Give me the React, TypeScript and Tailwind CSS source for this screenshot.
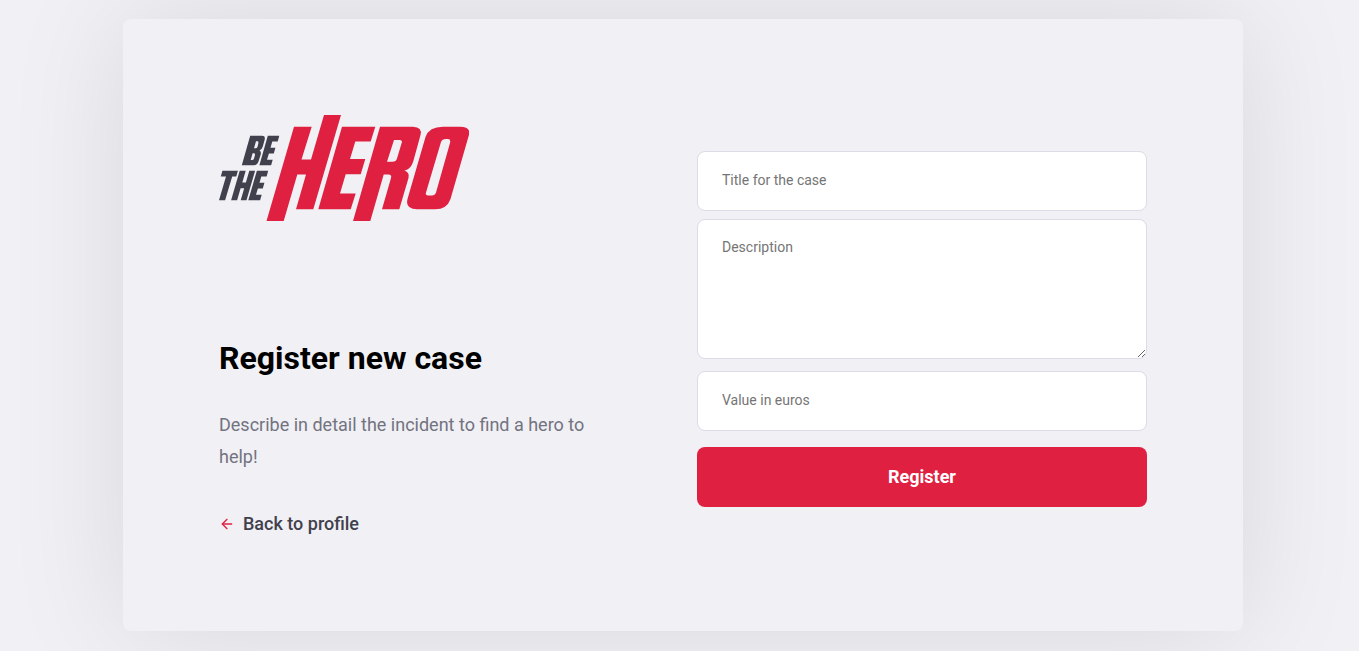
import { FiArrowLeft } from "react-icons/fi";

function Logo() {
  return (
    <svg viewBox="0 0 250 106" width="250" height="106" role="img" aria-label="Be The Hero">
      <g fill="#41414d" fillRule="evenodd">
        <path d="M31.200 20.800H43Q46.500 20.800 45.700 24.500L43.800 31.500Q43 34.500 40.500 35.500Q42.500 36.500 41.700 39.500L39.500 46.500Q38.300 50.200 35 50.200H22.800ZM37 26.200L35 33.200H37Q38.200 33.200 38.600 31.500L39.300 28.500Q39.700 26.200 38.500 26.200ZM33.600 38.300L31.700 45H33.500Q34.700 45 35.100 43.300L35.900 40.200Q36.300 38.300 35 38.300Z" />
        <path d="M48.800 20.800H60.300L58.700 26.600H53.300L51.500 32.700H56.400L54.800 38.500H49.900L48 44.700H53.700L52.100 50.200H40.400Z" />
        <path d="M3.400 55.700H18.900L17.300 61.500H13.200L6.100 85.200H0L7 61.500H1.800Z" />
        <path d="M20.700 55.700H26.700L23.300 67.400H26.900L30.300 55.700H36.100L27.500 85.200H21.700L25.200 73.200H21.600L18.100 85.200H12.100Z" />
        <path d="M37.900 55.700H49.200L47.600 61.500H42.300L40.500 67.700H45.400L43.800 73.500H38.900L37 79.700H42.700L41.100 85.200H29.300Z" />
      </g>
      <g fill="#e02041" fillRule="evenodd">
        <path d="M75 11.700H92.700L82.500 44.500H92L105 0H122L94.300 94.300H77L87 59.500H78.300L64.700 106H47.500Z" />
        <path d="M123 11.700H156.300L151.700 26.500H136.300L131 44H146.300L141.700 59.300H126.700L121 78.500H136.700L131.700 94.300H99.300Z" />
        <path d="M161 11.700H194Q203.500 12 201.500 20L194.500 45.500C192.500 52 190 54.500 185.500 55.500Q191 57.500 189.500 63L180.300 94.300H163L172 63Q173 59.500 169.500 59.500H164.700L151.300 106H134ZM175 25L168 46.700H173.500Q177 46.700 178 43.500L182.800 27.500Q183.500 25 180.500 25Z" />
        <path d="M224 11.700H241Q252.500 12 249.800 20.500L231.500 84Q228 94.300 216 94.300H198Q186 94 188.500 84L206.500 22Q210 11.700 224 11.700ZM227 24Q223 24 222 27L207 77.500Q206 80.500 209 80.500H213Q216 80.500 217 77.500L231 28Q232 24 229 24Z" />
      </g>
    </svg>
  );
}

const fieldClass =
  "w-full rounded-lg border border-[#dcdce6] bg-white px-6 text-sm text-[#333333] placeholder:text-[#757575]";

export default function App() {
  return (
    <div className="min-h-screen bg-[#f0f0f5] font-['Roboto',sans-serif]">
      <div className="mx-auto max-w-[1187px] pt-[19px] pr-[30px] pb-5 pl-[37px]">
        <main className="flex flex-wrap items-center justify-between gap-y-12 rounded-lg bg-[#f0f0f5] p-24 shadow-[0_0_120px_rgba(0,0,0,0.1)]">
          <section className="flex w-full max-w-[380px] flex-col items-start">
            <Logo />
            <h1 className="mt-[118px] text-[32px] leading-[38px] font-bold text-black">Register new case</h1>
            <p className="mt-8 text-lg leading-8 text-[#737380]">
              Describe in detail the incident to find a hero to help!
            </p>
            <a href="#profile" className="mt-10 flex items-center gap-2 text-lg leading-[22px] font-medium text-[#41414d]">
              <FiArrowLeft size={16} color="#e02041" aria-hidden="true" />
              Back to profile
            </a>
          </section>
          <form className="flex w-full max-w-[450px] flex-col pt-2" onSubmit={(e) => e.preventDefault()}>
            <input aria-label="Title for the case" placeholder="Title for the case" className={`h-[60px] pb-0.5 ${fieldClass}`} />
            <textarea
              aria-label="Description"
              placeholder="Description"
              className={`mt-2 block h-[140px] min-h-[140px] resize-y py-4 leading-[23px] ${fieldClass}`}
            />
            <input aria-label="Value in euros" placeholder="Value in euros" className={`mt-3 h-[60px] pb-0.5 ${fieldClass}`} />
            <button type="submit" className="mt-4 h-[60px] w-full rounded-lg bg-[#e02041] text-lg font-bold text-white">
              Register
            </button>
          </form>
        </main>
      </div>
    </div>
  );
}
